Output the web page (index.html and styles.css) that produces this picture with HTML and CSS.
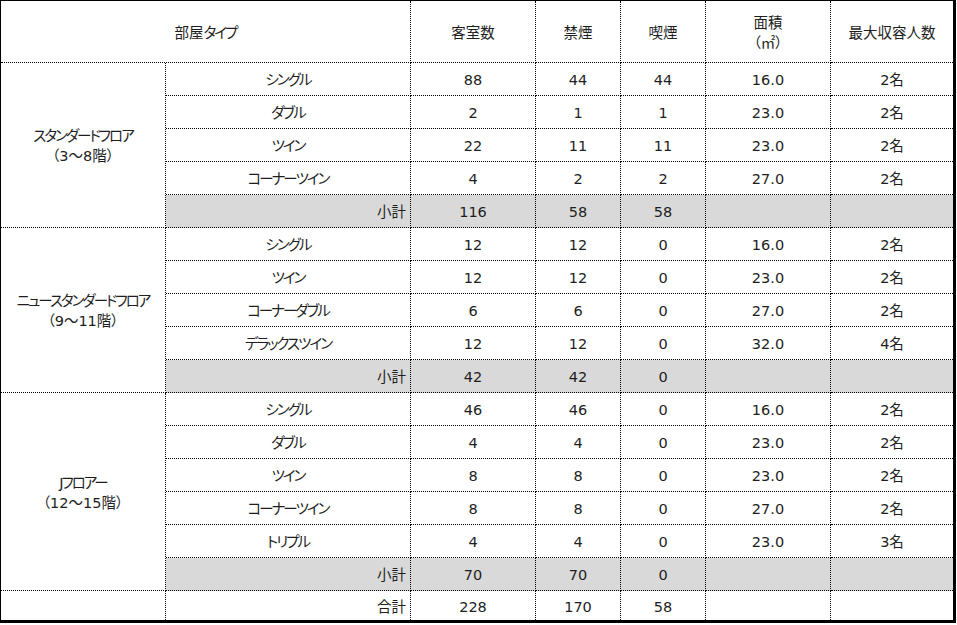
FILE: index.html
```html
<!DOCTYPE html>
<html lang="ja">
<head>
<meta charset="utf-8">
<title>客室タイプ</title>
<link rel="stylesheet" href="styles.css">
</head>
<body>
<table class="rooms">
  <colgroup>
    <col class="c-floor">
    <col class="c-type">
    <col class="c-count">
    <col class="c-nosmoke">
    <col class="c-smoke">
    <col class="c-area">
    <col class="c-cap">
  </colgroup>
  <thead>
    <tr class="head">
      <th colspan="2">部屋<span class="kana">タイプ</span></th>
      <th>客室数</th>
      <th>禁煙</th>
      <th>喫煙</th>
      <th>面積<br>（㎡）</th>
      <th class="last">最大収容人数</th>
    </tr>
  </thead>
  <tbody>
    <tr>
      <td class="floor" rowspan="5"><span class="kana">スタンダードフロア</span><br>（3～8階）</td>
      <td class="kana">シングル</td><td>88</td><td>44</td><td>44</td><td>16.0</td><td class="last">2名</td>
    </tr>
    <tr><td class="kana">ダブル</td><td>2</td><td>1</td><td>1</td><td>23.0</td><td class="last">2名</td></tr>
    <tr><td class="kana">ツイン</td><td>22</td><td>11</td><td>11</td><td>23.0</td><td class="last">2名</td></tr>
    <tr><td class="kana">コーナーツイン</td><td>4</td><td>2</td><td>2</td><td>27.0</td><td class="last">2名</td></tr>
    <tr class="sub"><td class="label">小計</td><td>116</td><td>58</td><td>58</td><td></td><td class="last"></td></tr>

    <tr>
      <td class="floor" rowspan="5"><span class="kana">ニュースタンダードフロア</span><br>（9～11階）</td>
      <td class="kana">シングル</td><td>12</td><td>12</td><td>0</td><td>16.0</td><td class="last">2名</td>
    </tr>
    <tr><td class="kana">ツイン</td><td>12</td><td>12</td><td>0</td><td>23.0</td><td class="last">2名</td></tr>
    <tr><td class="kana">コーナーダブル</td><td>6</td><td>6</td><td>0</td><td>27.0</td><td class="last">2名</td></tr>
    <tr><td class="kana">デラックスツイン</td><td>12</td><td>12</td><td>0</td><td>32.0</td><td class="last">4名</td></tr>
    <tr class="sub"><td class="label">小計</td><td>42</td><td>42</td><td>0</td><td></td><td class="last"></td></tr>

    <tr>
      <td class="floor" rowspan="6"><span class="kana">Jフロアー</span><br>（12～15階）</td>
      <td class="kana">シングル</td><td>46</td><td>46</td><td>0</td><td>16.0</td><td class="last">2名</td>
    </tr>
    <tr><td class="kana">ダブル</td><td>4</td><td>4</td><td>0</td><td>23.0</td><td class="last">2名</td></tr>
    <tr><td class="kana">ツイン</td><td>8</td><td>8</td><td>0</td><td>23.0</td><td class="last">2名</td></tr>
    <tr><td class="kana">コーナーツイン</td><td>8</td><td>8</td><td>0</td><td>27.0</td><td class="last">2名</td></tr>
    <tr><td class="kana">トリプル</td><td>4</td><td>4</td><td>0</td><td>23.0</td><td class="last">3名</td></tr>
    <tr class="sub"><td class="label">小計</td><td>70</td><td>70</td><td>0</td><td></td><td class="last"></td></tr>

    <tr class="total">
      <td class="floor"></td>
      <td class="label">合計</td><td>228</td><td>170</td><td>58</td><td></td><td class="last"></td>
    </tr>
  </tbody>
</table>
</body>
</html>
```

FILE: styles.css
```css
html, body {
  margin: 0;
  padding: 0;
  background: #ffffff;
}

.rooms {
  table-layout: fixed;
  border-collapse: separate;
  border-spacing: 0;
  width: 956px;
  border-top: 1px solid #000;
  border-left: 1px solid #000;
  border-right: 3px solid #000;
  border-bottom: 3px solid #000;
  font-family: "DejaVu Sans", "Noto Sans CJK JP", sans-serif;
  font-size: 14.5px;
  font-feature-settings: "palt";
  line-height: 20px;
  color: #1e1e1e;
}

.c-floor { width: 165px; }
.c-type { width: 245px; }
.c-count { width: 125px; }
.c-nosmoke { width: 85px; }
.c-smoke { width: 85px; }
.c-area { width: 125px; }
.c-cap { width: 122px; }

.rooms th,
.rooms td {
  box-sizing: border-box;
  padding: 2px 0 0 0;
  font-weight: normal;
  text-align: center;
  vertical-align: middle;
  border-right: 1px dotted #000;
  border-bottom: 1px dotted #000;
  white-space: nowrap;
}

.rooms .kana {
  letter-spacing: -2px;
}

.rooms .last {
  border-right: none;
}

.head {
  height: 62px;
}

.rooms tbody tr {
  height: 33px;
}

.rooms tbody tr.total {
  height: 29px;
}

.rooms tr.total td {
  border-bottom: none;
}

.sub td {
  background: #d9d9d9;
}

.rooms td.floor {
  background: #ffffff;
}

.rooms td.label {
  text-align: right;
  padding-right: 4px;
}
```
